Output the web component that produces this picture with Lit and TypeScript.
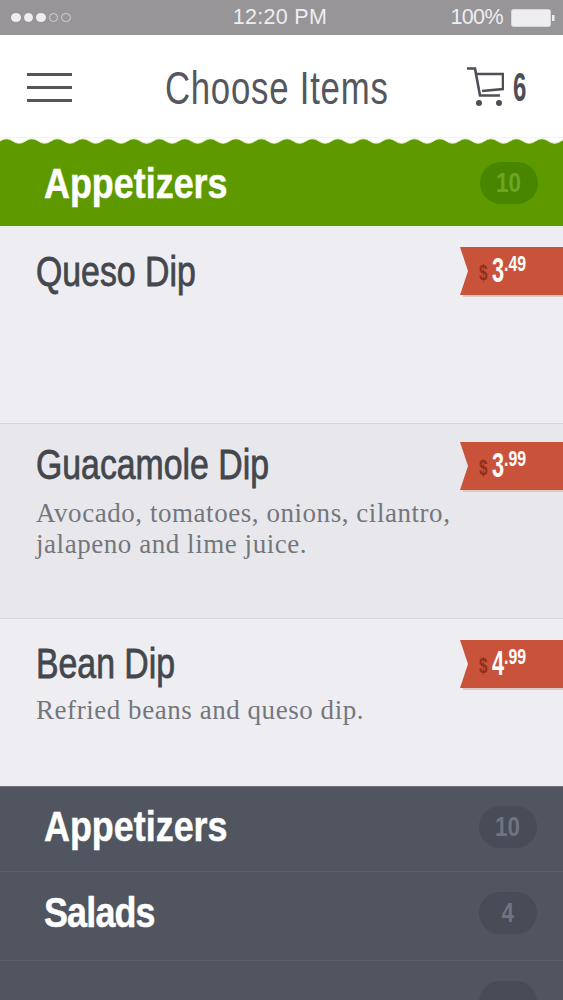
import { LitElement, html, css } from "lit";
import { customElement } from "lit/decorators.js";

const items = [
  { name: "Queso Dip", desc: [], whole: "3", cents: ".49", cls: "a" },
  { name: "Guacamole Dip", desc: ["Avocado, tomatoes, onions, cilantro,", "jalapeno and lime juice."], whole: "3", cents: ".99", cls: "b" },
  { name: "Bean Dip", desc: ["Refried beans and queso dip."], whole: "4", cents: ".99", cls: "c" },
];

@customElement("app-root")
export class AppRoot extends LitElement {
  static styles = css`
    :host { display: block; width: 563px; height: 1000px; overflow: hidden; background: #50555f; font-family: "Liberation Sans", sans-serif; }
    .status { height: 35px; background: #979598; display: grid; grid-template-columns: 1fr auto 1fr; align-items: center; color: #eeeef0; font: 21.5px "Liberation Sans", sans-serif; padding: 0 8px 0 11px; }
    .time { transform: translateX(-3px); letter-spacing: 0.3px; }
    .dots { display: flex; gap: 3px; }
    .dot { width: 9.5px; height: 9.5px; border-radius: 50%; background: #eeeef0; box-sizing: border-box; border: 1px solid #eeeef0; }
    .dot.off { background: none; border-color: #d0d0d2; }
    .right { display: flex; justify-content: flex-end; align-items: center; gap: 8px; letter-spacing: -0.6px; }
    .header { height: 104px; background: #fff; display: flex; align-items: center; color: #4c4f55; padding: 0 37px 0 27px; }
    .burger { display: flex; flex-direction: column; gap: 10px; width: 45px; flex: none; }
    .burger i { display: block; height: 3px; background: #55565a; }
    .title { flex: 1; text-align: center; font-size: 46px; letter-spacing: 1px; color: #54575d; line-height: 1; padding-top: 1px; padding-left: 14px; white-space: nowrap; transform: scaleX(0.756); transform-origin: 52% 50%; }
    .cart { display: flex; align-items: center; gap: 9px; font-size: 40px; font-weight: 700; color: #4c4f55; flex: none; }
    .cart svg { display: block; }
    .six { display: block; width: 13px; transform: scaleX(0.6); transform-origin: left center; line-height: 1; }
    .green { height: 87px; background: #5f9900; position: relative; display: flex; align-items: center; justify-content: space-between; padding: 2px 25px 0 44px; box-sizing: border-box; }
    .wave { position: absolute; left: 0; top: -2px; display: block; }
    .cat { font-size: 43px; font-weight: 700; color: #fff; line-height: 1; white-space: nowrap; transform: scaleX(0.835); transform-origin: left center; -webkit-text-stroke: 0.5px #fff; }
    .cat.tight { letter-spacing: -1px; }
    .pill { width: 58px; height: 42px; border-radius: 21px; display: flex; align-items: center; justify-content: center; font-size: 28px; font-weight: 700; }
    .pill span { transform: scaleX(0.8); }
    .green .pill { background: #488600; color: #6da524; margin-top: -2px; }
    .item { position: relative; padding: 0 0 0 36px; color: #44474d; box-sizing: border-box; border-bottom: 1px solid #d6d6da; }
    .item.a { height: 198px; background: #eeeef2; padding-top: 22px; }
    .item.b { height: 195px; background: #e8e8ec; padding-top: 17px; }
    .item.c { height: 167px; background: #eeeef2; padding-top: 21px; border-bottom: none; }
    .name { font-size: 42px; line-height: 48px; -webkit-text-stroke: 0.8px #44474d; white-space: nowrap; transform: scaleX(0.805); transform-origin: left center; }
    .desc { font: 27px/31px "Liberation Serif", serif; color: #74767c; margin-top: 9px; white-space: nowrap; letter-spacing: 0.55px; }
    .item.c .desc { margin-top: 7px; }
    .ribbon { position: absolute; right: 0; top: 21px; width: 103px; height: 48px; background: #c9533a; clip-path: polygon(0 0, 100% 0, 100% 100%, 0 100%, 8px 50%); display: flex; align-items: flex-start; padding-left: 19px; box-sizing: border-box; font-weight: 700; color: #fff; }
    .item.b .ribbon { top: 18px; }
    .shadow { position: absolute; right: 0; top: 69px; width: 100px; height: 2px; background: #dcc8c6; }
    .item.b .shadow { top: 66px; }
    .dollar, .whole, .cents { display: block; transform-origin: left top; }
    .dollar { font-size: 22px; color: #8f2f1c; margin-top: 13px; width: 13px; transform: scaleX(0.7); }
    .whole { font-size: 35px; line-height: 46px; width: 12px; transform: scaleX(0.62); }
    .cents { font-size: 22px; line-height: 34px; transform: scaleX(0.72); }
    .row { display: flex; align-items: center; justify-content: space-between; padding: 0 26px 5px 44px; border-bottom: 1px solid #5a5f69; box-sizing: border-box; }
    .row.one { height: 86px; border-top: 1px solid #70737a; }
    .row.two { height: 89px; padding-bottom: 7px; }
    .row.three { height: 60px; border: none; padding-bottom: 0; align-items: flex-start; padding-top: 20px; }
    .row .pill { background: #474c56; color: #6e7480; }
    .spacer { width: 1px; }
  `;

  render() {
    const wave = Array.from({ length: 23 }, () => `q6.4 -4.5 12.75 0 q6.4 4.5 12.75 0`).join(" ");
    return html`
      <div class="status">
        <div class="dots">
          <span class="dot"></span><span class="dot"></span><span class="dot"></span><span class="dot off"></span><span class="dot off"></span>
        </div>
        <div class="time">12:20 PM</div>
        <div class="right">100%
          <svg width="44" height="18" viewBox="0 0 44 18"><rect x="0.5" y="0.5" width="39" height="17" rx="2" fill="#eeeef0" stroke="#d8d8da"/><rect x="41" y="6" width="2.5" height="6" fill="#eeeef0"/></svg>
        </div>
      </div>
      <div class="header">
        <div class="burger"><i></i><i></i><i></i></div>
        <div class="title">Choose Items</div>
        <div class="cart">
          <svg width="37" height="40" viewBox="0 0 37 40" fill="none" stroke="#4c4f55" stroke-width="2.6">
            <path d="M0 1.5 H8 L13 28.5 H33"/>
            <path d="M10 7 H36 V22 L15 24"/>
            <circle cx="12" cy="36" r="3" fill="#4c4f55" stroke="none"/>
            <circle cx="32" cy="36" r="3" fill="#4c4f55" stroke="none"/>
          </svg>
          <span class="six">6</span>
        </div>
      </div>
      <div class="green">
        <svg class="wave" width="563" height="8" viewBox="0 0 563 8">
          <path d=${`M0 4 ${wave} V0 H0 Z`} fill="#fff" stroke="#e6f0c8" stroke-width="1"></path>
        </svg>
        <div class="cat">Appetizers</div>
        <div class="pill"><span>10</span></div>
      </div>
      ${items.map(
        (it) => html`
          <div class="item ${it.cls}">
            <div class="name">${it.name}</div>
            ${it.desc.length ? html`<div class="desc">${it.desc.map((l) => html`<div>${l}</div>`)}</div>` : ""}
            <div class="shadow"></div>
            <div class="ribbon"><span class="dollar">$</span><span class="whole">${it.whole}</span><span class="cents">${it.cents}</span></div>
          </div>
        `
      )}
      <div class="row one"><div class="cat">Appetizers</div><div class="pill"><span>10</span></div></div>
      <div class="row two"><div class="cat tight">Salads</div><div class="pill"><span>4</span></div></div>
      <div class="row three"><div class="spacer"></div><div class="pill"></div></div>
    `;
  }
}
